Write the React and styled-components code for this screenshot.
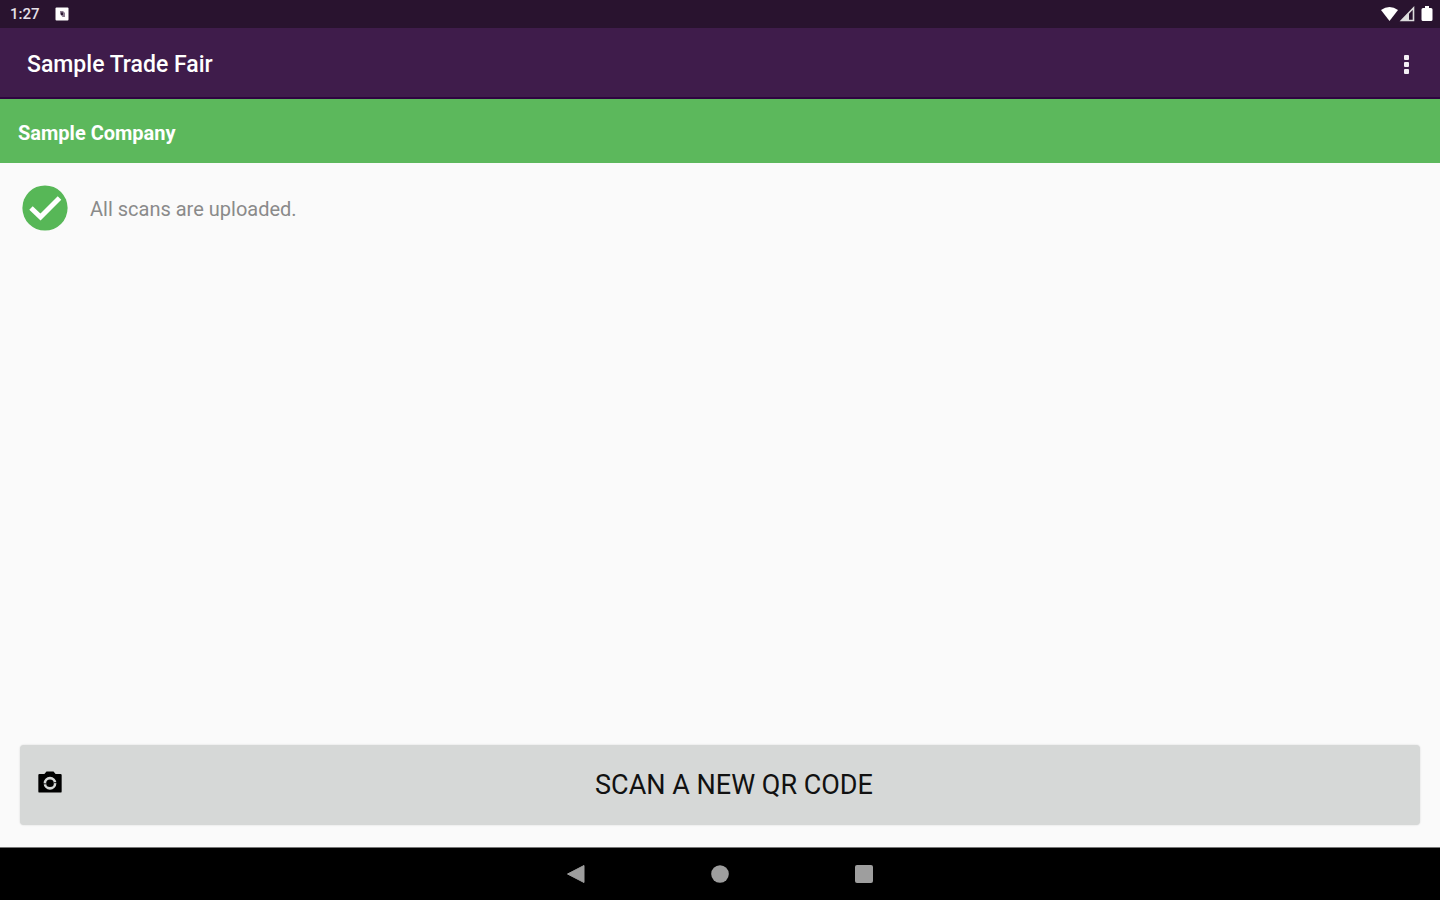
import styled, { createGlobalStyle } from 'styled-components';

const App = () => {
  return (
    <>
      <GlobalStyle />
      <Screen>
        <StatusBar>
          <StatusGroup>
            <Clock>1:27</Clock>
            <svg width="14" height="14" viewBox="0 0 14 14" aria-hidden="true">
              <rect x="0.500" y="0.500" width="13" height="13" rx="1" fill="#fff" />
              <path d="M5 4h3l2 2v4H7.500L5 7z" fill="#8b7d90" />
              <path d="M6 5.500h2v2.500h-2z" fill="#2d1b34" />
            </svg>
          </StatusGroup>
          <SignalIcons />
        </StatusBar>

        <Toolbar>
          <Title>Sample Trade Fair</Title>
          <MenuButton type="button" aria-label="More options">
            <svg width="28" height="28" viewBox="0 0 28 28" fill="#f4f0f5" aria-hidden="true">
              <rect x="12" y="4" width="5" height="5" rx="1" />
              <rect x="12" y="11" width="5" height="5" rx="1" />
              <rect x="12" y="18" width="5" height="5" rx="1" />
            </svg>
          </MenuButton>
        </Toolbar>

        <CompanyBar>Sample Company</CompanyBar>

        <Main>
          <UploadStatus>
            <svg width="46" height="46" viewBox="0 0 46 46" aria-hidden="true">
              <circle cx="23" cy="23" r="22.600" fill="#57b757" />
              <path d="M9 23 18.500 32 37.500 13" fill="none" stroke="#fff" strokeWidth="5" />
            </svg>
            <StatusText>All scans are uploaded.</StatusText>
          </UploadStatus>

          <ScanButton type="button">
            <CameraIcon />
            <ScanLabel>SCAN A NEW QR CODE</ScanLabel>
          </ScanButton>
        </Main>

        <NavBar>
          <NavButton type="button" aria-label="Back">
            <svg width="20" height="20" viewBox="0 0 20 20" aria-hidden="true">
              <path d="M18 1.500v17L1.500 10z" fill="#9e9e9e" stroke="#9e9e9e" strokeLinejoin="round" />
            </svg>
          </NavButton>
          <NavButton type="button" aria-label="Home">
            <svg width="20" height="20" viewBox="0 0 20 20" aria-hidden="true">
              <circle cx="10" cy="10" r="8.800" fill="#9e9e9e" />
            </svg>
          </NavButton>
          <NavButton type="button" aria-label="Recent apps">
            <svg width="20" height="20" viewBox="0 0 20 20" aria-hidden="true">
              <rect x="1" y="1" width="18" height="18" rx="2" fill="#9e9e9e" />
            </svg>
          </NavButton>
        </NavBar>
      </Screen>
    </>
  );
};

// Wi-Fi, mobile signal and battery
const SignalIcons = () => (
  <svg width="54" height="18" viewBox="0 0 54 18" aria-hidden="true">
    <path d="M1 5Q9.500-1 18 5L9.500 16z" fill="#fff" />
    <path d="M33.500 3v12.500H21.500z" fill="none" stroke="#ddd" strokeWidth="1.600" />
    <path d="M29 8v7h-7z" fill="#ddd" />
    <path d="M43 3h2V1h4v2h2q1.500 0 1.500 1.500v10q0 1.500-1.500 1.500h-8q-1.500 0-1.500-1.500v-10Q41.500 3 43 3z" fill="#fff" />
  </svg>
);

const CameraIcon = () => (
  <svg width="28" height="28" viewBox="0 1.500 24 24" aria-hidden="true">
    <path
      d="M9 2 7.170 4H3a1 1 0 0 0-1 1v14a1 1 0 0 0 1 1h18a1 1 0 0 0 1-1V5a1 1 0 0 0-1-1h-4.170L15 2z"
      fill="#000"
    />
    <circle cx="12" cy="12" r="4.400" fill="none" stroke="#d6d8d7" strokeWidth="2.200" />
    <path d="M5.500 12.500h3M15.500 11.500h3" stroke="#000" strokeWidth="0.800" />
    <path d="M12 9.500 14.200 12.500v1.500h-4.400v-1.500z" fill="#000" />
  </svg>
);

const GlobalStyle = createGlobalStyle`
  * {
    box-sizing: border-box;
  }

  body {
    margin: 0;
    font-family: Roboto, "Liberation Sans", sans-serif;
  }

  button {
    border: none;
    padding: 0;
    background: none;
    font-family: inherit;
    cursor: pointer;
  }

  svg {
    display: block;
    flex-shrink: 0;
  }
`;

const Screen = styled.div`
  display: flex;
  flex-direction: column;
  min-height: 100vh;
  background-color: #fafafa;
`;

const StatusBar = styled.div`
  display: flex;
  align-items: center;
  justify-content: space-between;
  height: 28px;
  padding: 0 6px 0 10px;
  background-color: #29132f;
`;

const StatusGroup = styled.div`
  display: flex;
  align-items: center;
  gap: 15px;
`;

const Clock = styled.span`
  color: #e6e0e8;
  font-size: 15px;
  font-weight: 500;
  line-height: 20px;
`;

const Toolbar = styled.header`
  display: flex;
  align-items: center;
  justify-content: space-between;
  height: 71px;
  padding: 4px 20px 0 27px;
  background-color: #3f1c4b;
  border-bottom: 2px solid #2e0540;
`;

const Title = styled.h1`
  margin: 0;
  color: #fff;
  font-size: 23px;
  font-weight: 500;
  line-height: 28px;
`;

const MenuButton = styled.button`
  display: flex;
`;

const CompanyBar = styled.div`
  padding: 22px 18px 18px;
  background-color: #5cb85c;
  color: #fff;
  font-size: 20px;
  font-weight: 700;
  line-height: 24px;
`;

const Main = styled.main`
  display: flex;
  flex: 1;
  flex-direction: column;
  justify-content: space-between;
  padding: 22px 20px;
`;

const UploadStatus = styled.div`
  display: flex;
  align-items: center;
  gap: 22px;
  padding-left: 2px;
`;

const StatusText = styled.p`
  margin: 0;
  padding-top: 2px;
  color: #8a8a8a;
  font-size: 20px;
  line-height: 24px;
`;

const ScanButton = styled.button`
  display: flex;
  align-items: center;
  width: 100%;
  padding: 24px 16px;
  border-radius: 4px;
  background-color: #d6d8d7;
  box-shadow: 0 0 2px rgba(0, 0, 0, 0.15);
`;

const ScanLabel = styled.span`
  flex: 1;
  color: #111;
  font-size: 27px;
  line-height: 32px;
  text-align: center;
`;

const NavBar = styled.nav`
  display: flex;
  justify-content: center;
  gap: 124px;
  height: 53px;
  border-top: 1px solid #777;
  background-color: #000;
`;

const NavButton = styled.button`
  display: flex;
  align-items: center;
`;

export default App;
